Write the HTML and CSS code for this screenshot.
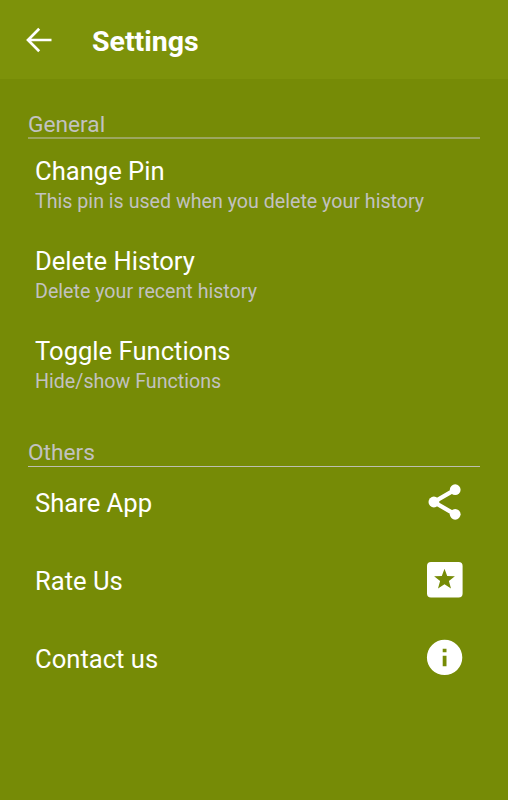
FILE: index.html
```html
<!DOCTYPE html>
<html lang="en">
<head>
    <meta charset="UTF-8">
    <meta name="viewport" content="width=device-width, initial-scale=1.0">
    <title>Settings</title>
    <link rel="stylesheet" href="styles.css">
</head>
<body>
    <header class="toolbar">
        <svg class="back" viewBox="0 0 26 26"><path d="M25.5 13H2.5M13.2 1.7L2 13l11.2 11.3"/></svg>
        <h1>Settings</h1>
    </header>
    <main>
        <section class="general">
            <h2>General</h2>
            <div class="item">
                <h3>Change Pin</h3>
                <p>This pin is used when you delete your history</p>
            </div>
            <div class="item">
                <h3>Delete History</h3>
                <p>Delete your recent history</p>
            </div>
            <div class="item">
                <h3>Toggle Functions</h3>
                <p>Hide/show Functions</p>
            </div>
        </section>
        <section class="others">
            <h2>Others</h2>
            <div class="row">
                <h3>Share App</h3>
                <svg class="icon" viewBox="0 0 36 36">
                    <path d="M28.2 5.6L6.9 18l21.3 12.4" fill="none" stroke="#fff" stroke-width="4.3"/>
                    <circle cx="28.2" cy="5.7" r="5.4"/>
                    <circle cx="6.9" cy="18" r="5.4"/>
                    <circle cx="28.2" cy="30.3" r="5.4"/>
                </svg>
            </div>
            <div class="row">
                <h3>Rate Us</h3>
                <svg class="icon" viewBox="0 0 36 36"><path fill-rule="evenodd" d="M4 0h27.6a4 4 0 0 1 4 4v27.6a4 4 0 0 1-4 4H4a4 4 0 0 1-4-4V4a4 4 0 0 1 4-4zM17.5 6.8l-2.7 7.2-7.7.3 6 4.8-2.1 7.5 6.5-4.3 6.5 4.3-2.1-7.5 6-4.8-7.7-.3z"/></svg>
            </div>
            <div class="row">
                <h3>Contact us</h3>
                <svg class="icon" viewBox="0 0 36 36"><path fill-rule="evenodd" d="M17.6-.3a17.7 17.7 0 1 0 0 35.4 17.7 17.7 0 0 0 0-35.4zM15.7 8.8h3.8v3.4h-3.8zM15.7 15.8h3.8V26.2h-3.8z"/></svg>
            </div>
        </section>
    </main>
</body>
</html>
```
FILE: styles.css
```css
* {
    box-sizing: border-box;
}
body {
    margin: 0;
    min-height: 800px;
    background: #768b06;
    color: #fff;
    font-family: Roboto, sans-serif;
}
h1, h2, h3, p {
    margin: 0;
}
svg {
    fill: #fff;
    overflow: visible;
}
.toolbar {
    display: flex;
    align-items: center;
    height: 79px;
    padding: 0 0 0 26px;
    background: #7d920a;
}
.toolbar h1 {
    margin-left: 40px;
    padding-top: 3px;
    font-size: 28.5px;
    font-weight: 700;
}
.back {
    width: 26px;
    height: 26px;
    fill: none;
    stroke: #fff;
    stroke-width: 2.7;
}
main {
    padding: 30px 28px 0;
}
h2 {
    height: 30px;
    border-bottom: 1px solid #bdbfb0;
    color: #c2c2c0;
    font-size: 22.7px;
    font-weight: 400;
    line-height: 32px;
}
.general h2 {
    border-bottom: 2px solid #9ca65f;
    line-height: 31px;
}
h3 {
    font-size: 25.6px;
    font-weight: 400;
    line-height: 32px;
}
.item {
    height: 90px;
    padding: 16px 7px 0;
}
.item p {
    color: #c2c2c0;
    font-size: 19.65px;
    line-height: 30px;
}
.others {
    padding-top: 28px;
}
.row {
    display: flex;
    align-items: center;
    justify-content: space-between;
    height: 78px;
    padding: 0 17px 8px 7px;
}
.row h3 {
    padding-top: 2px;
}
.icon {
    width: 36px;
    height: 36px;
}
```
